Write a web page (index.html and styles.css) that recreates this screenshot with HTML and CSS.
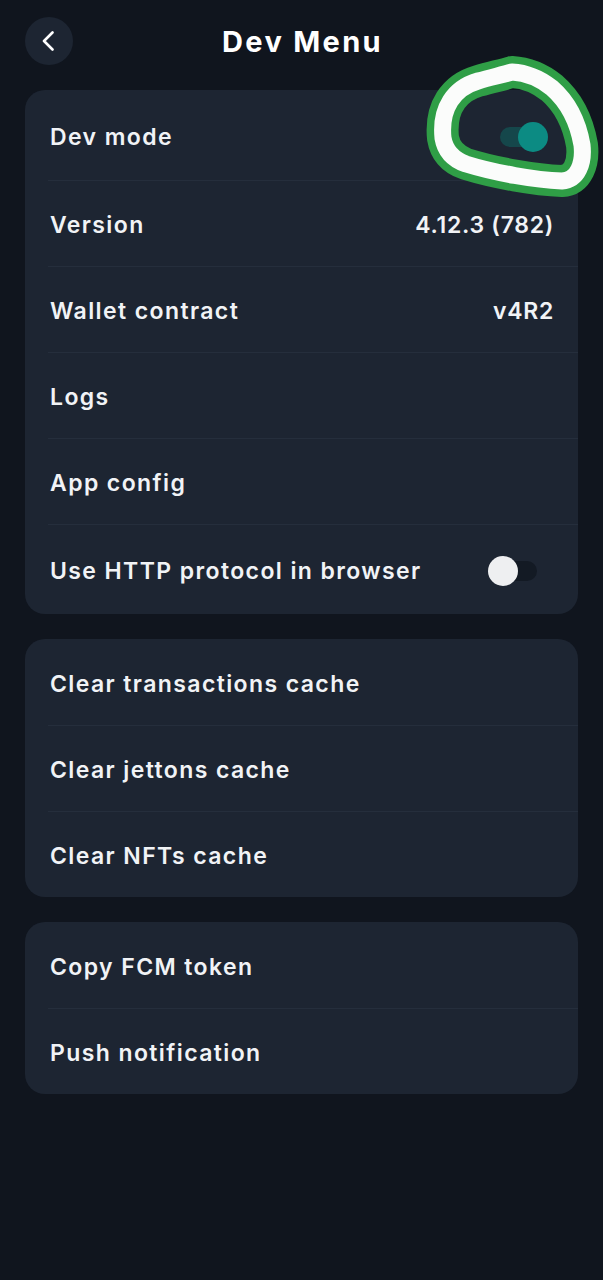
FILE: index.html
```html
<!DOCTYPE html>
<html>
<head>
<meta charset="utf-8">
<link rel="stylesheet" href="styles.css">
</head>
<body>
<div class="screen">
  <header class="header">
    <button class="back" aria-label="Back">
      <svg width="20" height="20" viewBox="0 0 20 20"><path d="M13.5 1.5 L5 10 L13.5 18.5" fill="none" stroke="#ffffff" stroke-width="2.6" stroke-linecap="round" stroke-linejoin="round"/></svg>
    </button>
    <h1 class="title">Dev Menu</h1>
  </header>

  <section class="card">
    <div class="row row-tall">
      <span class="label">Dev mode</span>
      <span class="toggle toggle-on"><span class="knob"></span></span>
    </div>
    <div class="row">
      <span class="label">Version</span>
      <span class="value">4.12.3 (782)</span>
    </div>
    <div class="row">
      <span class="label">Wallet contract</span>
      <span class="value">v4R2</span>
    </div>
    <div class="row"><span class="label">Logs</span></div>
    <div class="row"><span class="label">App config</span></div>
    <div class="row row-tall">
      <span class="label">Use HTTP protocol in browser</span>
      <span class="toggle toggle-off"><span class="knob"></span></span>
    </div>
  </section>

  <section class="card">
    <div class="row"><span class="label">Clear transactions cache</span></div>
    <div class="row"><span class="label">Clear jettons cache</span></div>
    <div class="row"><span class="label">Clear NFTs cache</span></div>
  </section>

  <section class="card">
    <div class="row"><span class="label">Copy FCM token</span></div>
    <div class="row"><span class="label">Push notification</span></div>
  </section>

  <svg class="scribble" width="603" height="260" viewBox="0 0 603 260">
    <path class="scr-green" d="M443,138 C440,108 454,88 478,81 C492,77 502,75 512,72 C530,73 542,80 552,88 C568,102 578,122 582,145 C584,163 578,180 562,181 C535,180 495,173 466,164 C452,159 445,150 443,138 Z"/>
    <path class="scr-white" d="M443,138 C440,108 454,88 478,81 C492,77 502,75 512,72 C530,73 542,80 552,88 C568,102 578,122 582,145 C584,163 578,180 562,181 C535,180 495,173 466,164 C452,159 445,150 443,138 Z"/>
  </svg>
</div>
</body>
</html>
```

FILE: styles.css
```css
html, body {
  margin: 0;
  padding: 0;
  background: #10151e;
}

.screen {
  position: relative;
  width: 603px;
  min-height: 1280px;
  font-family: "Inter", "Liberation Sans", sans-serif;
  color: #f1f3f6;
  display: flex;
  flex-direction: column;
  gap: 25px;
  padding-bottom: 40px;
  box-sizing: border-box;
}

.header {
  height: 65px;
  display: flex;
  align-items: center;
  justify-content: center;
  position: relative;
}

.back {
  position: absolute;
  left: 25px;
  top: 17px;
  width: 48px;
  height: 48px;
  border-radius: 50%;
  border: none;
  background: #1d2532;
  display: flex;
  align-items: center;
  justify-content: center;
  padding: 0;
}

.title {
  margin: 18px 0 0 2px;
  font-size: 29px;
  font-weight: 700;
  letter-spacing: 2.3px;
  color: #ffffff;
}

.card {
  margin: 0 25px;
  background: #1d2532;
  border-radius: 20px;
  display: flex;
  flex-direction: column;
  overflow: hidden;
}

.row {
  height: 86px;
  display: flex;
  align-items: center;
  justify-content: space-between;
  padding: 4px 24px 0 25px;
  box-sizing: border-box;
  position: relative;
}

.row + .row::before {
  content: "";
  position: absolute;
  left: 23px;
  right: 0;
  top: 0;
  height: 1px;
  background: #252e3c;
}

.row-tall {
  height: 90px;
}

.label, .value {
  font-size: 23px;
  font-weight: 600;
  letter-spacing: 1.4px;
  color: #f1f3f6;
}

.value {
  letter-spacing: 0.7px;
}

.toggle {
  position: relative;
  height: 20px;
  border-radius: 10px;
  display: block;
}

.toggle .knob {
  position: absolute;
  top: -5px;
  width: 30px;
  height: 30px;
  border-radius: 50%;
}

.toggle-on {
  width: 45px;
  background: #15474b;
  margin-right: 9px;
}
.toggle-on .knob {
  right: -3px;
  background: #0c8b83;
}

.toggle-off {
  width: 42px;
  background: #131a24;
  margin-right: 17px;
}
.toggle-off .knob {
  left: -7px;
  background: #eeeff1;
}

.scribble {
  position: absolute;
  left: 0;
  top: 0;
  pointer-events: none;
}

.scr-green {
  fill: none;
  stroke: #2f9e46;
  stroke-width: 32;
  stroke-linejoin: round;
}

.scr-white {
  fill: none;
  stroke: #fbfcfb;
  stroke-width: 17;
  stroke-linejoin: round;
}
```
